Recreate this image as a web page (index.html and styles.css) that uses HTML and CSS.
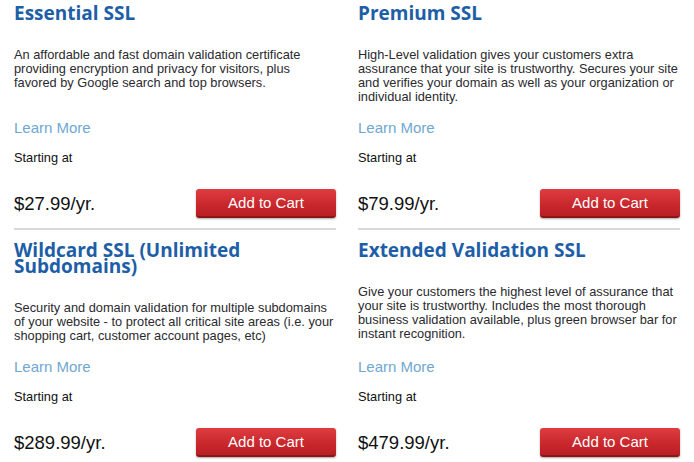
FILE: index.html
```html
<!DOCTYPE html>
<html lang="en">
<head>
    <meta charset="UTF-8">
    <meta name="viewport" content="width=device-width, initial-scale=1.0">
    <title>SSL Certificates</title>

    <link rel="stylesheet" href="styles.css">

</head>
<body>

    <div class="ssl-grid">

        <div class="ssl-card">
            <h2 class="ssl-title">Essential SSL</h2>
            <p class="ssl-desc">An affordable and fast domain validation certificate providing encryption and privacy for visitors, plus favored by Google search and top browsers.</p>
            <a href="#" class="learn-more">Learn More</a>
            <p class="starting">Starting at</p>
            <div class="price-row">
                <span class="price">$27.99/yr.</span>
                <button class="cart-button">Add to Cart</button>
            </div>
        </div>

        <div class="ssl-card">
            <h2 class="ssl-title">Premium SSL</h2>
            <p class="ssl-desc">High-Level validation gives your customers extra assurance that your site is trustworthy. Secures your site and verifies your domain as well as your organization or individual identity.</p>
            <a href="#" class="learn-more">Learn More</a>
            <p class="starting">Starting at</p>
            <div class="price-row">
                <span class="price">$79.99/yr.</span>
                <button class="cart-button">Add to Cart</button>
            </div>
        </div>

        <div class="ssl-card">
            <h2 class="ssl-title">Wildcard SSL (Unlimited Subdomains)</h2>
            <p class="ssl-desc">Security and domain validation for multiple subdomains of your website - to protect all critical site areas (i.e. your shopping cart, customer account pages, etc)</p>
            <a href="#" class="learn-more">Learn More</a>
            <p class="starting">Starting at</p>
            <div class="price-row">
                <span class="price">$289.99/yr.</span>
                <button class="cart-button">Add to Cart</button>
            </div>
        </div>

        <div class="ssl-card">
            <h2 class="ssl-title">Extended Validation SSL</h2>
            <p class="ssl-desc">Give your customers the highest level of assurance that your site is trustworthy. Includes the most thorough business validation available, plus green browser bar for instant recognition.</p>
            <a href="#" class="learn-more">Learn More</a>
            <p class="starting">Starting at</p>
            <div class="price-row">
                <span class="price">$479.99/yr.</span>
                <button class="cart-button">Add to Cart</button>
            </div>
        </div>

    </div>

</body>
</html>
```

FILE: styles.css
```css
body {
    margin: 0;
    background-color: #ffffff;
    color: #222222;
    font-family: "Liberation Sans", Arial, Helvetica, sans-serif;
}

.ssl-grid {
    display: grid;
    grid-template-columns: 322px 322px;
    column-gap: 22px;
    row-gap: 9px;
    padding: 2px 14px 0;
}

.ssl-card {
    display: flex;
    flex-direction: column;
    padding: 3px 0 10px;
    border-bottom: 2px solid #d8d8d8;
}

.ssl-title {
    margin: 0;
    font-family: "Open Sans", "Liberation Sans", sans-serif;
    font-weight: 700;
    font-size: 19px;
    line-height: 16px;
    color: #1d5ea7;
}

.ssl-desc {
    flex: 1;
    margin: 27px 0 0;
    font-size: 12.8px;
    line-height: 14px;
    color: #2a2a2e;
}

.learn-more {
    margin-top: 15px;
    font-size: 15px;
    line-height: 18px;
    color: #6fa7d1;
    text-decoration: none;
}

.starting {
    margin: 14px 0 0;
    font-size: 12.8px;
    line-height: 14px;
    color: #111111;
}

.price-row {
    display: flex;
    justify-content: space-between;
    align-items: center;
    margin-top: 24px;
}

.price {
    font-size: 18.5px;
    line-height: 22px;
    color: #111111;
}

.cart-button {
    width: 140px;
    height: 29px;
    padding: 0;
    border: none;
    border-bottom: 2px solid #8e1416;
    border-radius: 3px;
    background: linear-gradient(#de3c40, #c8272c 60%, #b81f24);
    box-shadow: 0 1px 2px rgba(0, 0, 0, 0.35);
    color: #ffffff;
    font-family: "Liberation Sans", Arial, sans-serif;
    font-size: 15px;
    cursor: pointer;
}
```
